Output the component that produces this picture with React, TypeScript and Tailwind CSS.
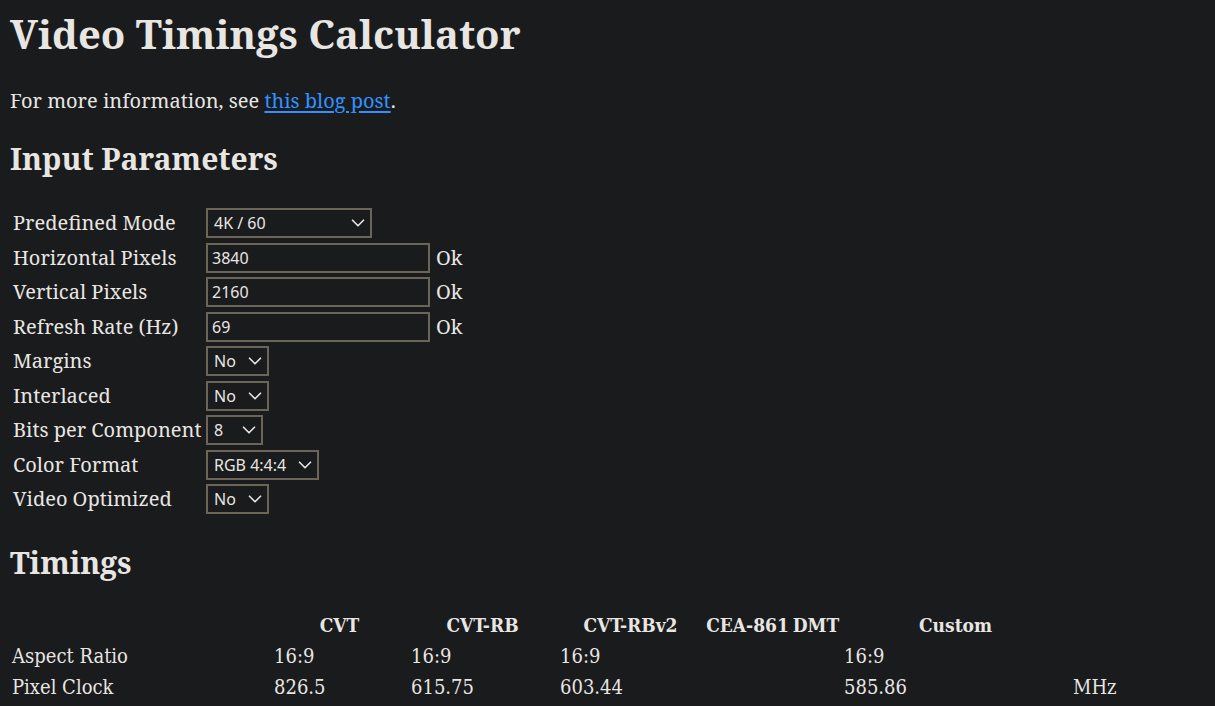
import { ChevronDown } from 'lucide-react';

const serif = "font-['Noto_Serif','DejaVu_Serif',serif]";

const Select = ({ value, width }: { value: string; width: string }) => (
  <div
    className={`${width} h-[30px] flex items-center justify-between border-2 border-[#6b6459] bg-[#1a1b1d] pl-[6px] pr-[1px] font-['Noto_Sans',sans-serif] text-[16px] text-[#e8e6e3]`}
  >
    <span>{value}</span>
    <ChevronDown className="w-[22px] h-[22px]" strokeWidth={1.8} />
  </div>
);

const TextInput = ({ value }: { value: string }) => (
  <div className="w-[224px] h-[30px] flex items-center border-2 border-[#6b6459] bg-[#1a1b1d] px-[4px] font-['Noto_Sans',sans-serif] text-[16px] text-[#e8e6e3]">
    {value}
  </div>
);

const params = [
  { label: 'Predefined Mode', control: <Select value="4K / 60" width="w-[166px]" /> },
  { label: 'Horizontal Pixels', control: <TextInput value="3840" />, ok: true },
  { label: 'Vertical Pixels', control: <TextInput value="2160" />, ok: true },
  { label: 'Refresh Rate (Hz)', control: <TextInput value="69" />, ok: true },
  { label: 'Margins', control: <Select value="No" width="w-[63px]" /> },
  { label: 'Interlaced', control: <Select value="No" width="w-[63px]" /> },
  { label: 'Bits per Component', control: <Select value="8" width="w-[57px]" /> },
  { label: 'Color Format', control: <Select value="RGB 4:4:4" width="w-[113px]" /> },
  { label: 'Video Optimized', control: <Select value="No" width="w-[63px]" /> },
];

const headers = ['', 'CVT', 'CVT-RB', 'CVT-RBv2', 'CEA-861', 'DMT', 'Custom', ''];

const rows = [
  ['Aspect Ratio', '16:9', '16:9', '16:9', '', '', '16:9', ''],
  ['Pixel Clock', '826.5', '615.75', '603.44', '', '', '585.86', 'MHz'],
];

const cols = 'grid grid-cols-[262px_137px_149px_147px_87px_50px_229px_80px]';

export default function App() {
  return (
    <div className={`min-h-screen bg-[#1a1b1d] text-[#e8e6e3] px-[10px] pt-[8px] ${serif}`}>
      <h1 className="text-[40px] font-bold leading-[52px]">Video Timings Calculator</h1>

      <p className="mt-[26px] text-[20px] leading-[30px]">
        For more information, see{' '}
        <a href="#" className="text-[#3391ff] underline underline-offset-[3px]">
          this blog post
        </a>
        .
      </p>

      <h2 className="mt-[23px] text-[30px] font-bold leading-[40px]">Input Parameters</h2>

      {/* Input parameters */}
      <div className="mt-[27px] flex flex-col">
        {params.map((p) => (
          <div key={p.label} className="flex items-center h-[34.5px]">
            <div className="w-[196px] pl-[3px] text-[20px] whitespace-nowrap">{p.label}</div>
            {p.control}
            {p.ok && <span className="ml-[6px] text-[20px]">Ok</span>}
          </div>
        ))}
      </div>

      <h2 className="mt-[26px] text-[30px] font-bold leading-[40px]">Timings</h2>

      {/* Timings table */}
      <div className="mt-[27px] font-['DejaVu_Serif_Condensed','Noto_Serif',serif] text-[20px]">
        <div className={`${cols} h-[31px] items-center font-bold text-[19px]`}>
          {headers.map((h, i) => (
            <div key={i} className="flex justify-center whitespace-nowrap pr-[2px]">
              {h}
            </div>
          ))}
        </div>
        {rows.map((r) => (
          <div key={r[0]} className={`${cols} h-[31px] items-center`}>
            {r.map((c, i) => (
              <div key={i} className="pl-[2px] whitespace-nowrap">
                {c}
              </div>
            ))}
          </div>
        ))}
      </div>
    </div>
  );
}
